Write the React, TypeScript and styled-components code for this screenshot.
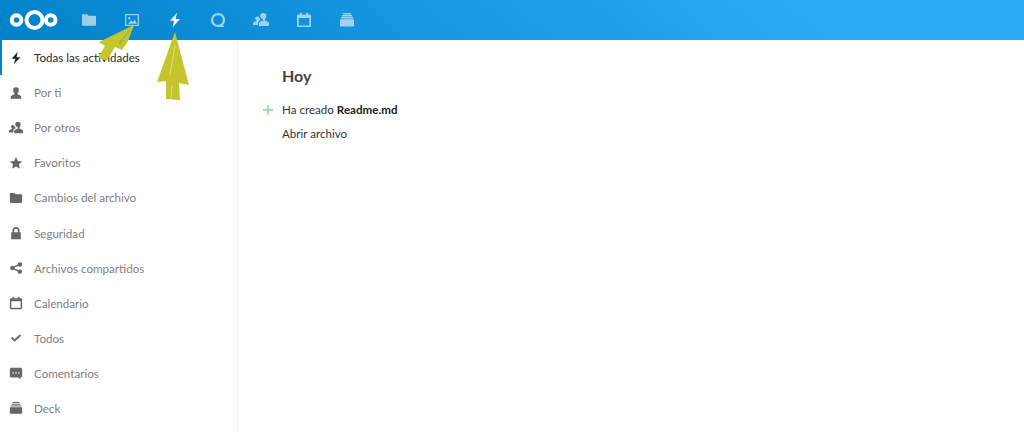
import React from 'react';
import styled, { createGlobalStyle } from 'styled-components';

const GlobalStyle = createGlobalStyle`
    html, body {
        margin: 0;
        padding: 0;
        background: #fff;
        font-family: 'Lato', 'Noto Sans', sans-serif;
        overflow: hidden;
    }
`;

const Page = styled.div`
    position: relative;
    width: 1024px;
    height: 432px;
    overflow: hidden;
`;

const Header = styled.header`
    height: 40px;
    display: flex;
    align-items: center;
    padding-left: 9px;
    background: linear-gradient(40deg, #0082c9 0%, #2aa9f5 78%);
`;

const Logo = styled.svg`
    width: 49px;
    height: 24px;
    margin-right: 9px;
`;

const AppList = styled.nav`
    display: flex;
`;

const AppIcon = styled.div<{ $active?: boolean }>`
    width: 43px;
    height: 40px;
    display: flex;
    align-items: center;
    justify-content: center;
    opacity: ${(p) => (p.$active ? 1 : 0.6)};
    svg {
        width: 16px;
        height: 16px;
        fill: #fff;
    }
`;

const Body = styled.div`
    display: flex;
    height: 392px;
`;

const Sidebar = styled.aside`
    width: 237px;
    border-right: 1px solid #eee;
    flex-shrink: 0;
`;

const NavItem = styled.div<{ $active?: boolean }>`
    height: 35.1px;
    display: flex;
    align-items: center;
    box-sizing: border-box;
    padding-left: 9px;
    font-size: 11.6px;
    color: ${(p) => (p.$active ? '#2a2a2a' : '#808080')};
    box-shadow: ${(p) => (p.$active ? 'inset 2px 0 0 #0082c9' : 'none')};
    svg {
        width: 14px;
        height: 14px;
        margin-right: 11px;
        flex-shrink: 0;
        fill: ${(p) => (p.$active ? '#222' : '#666')};
    }
`;

const Content = styled.main`
    flex: 1;
    padding: 26px 0 0 44px;
`;

const DayTitle = styled.h2`
    margin: 0 0 12px;
    font-size: 16px;
    line-height: 20px;
    font-weight: 700;
    color: #444;
`;

const ActivityRow = styled.div`
    position: relative;
    font-size: 11.6px;
    line-height: 24px;
    color: #333;
    b {
        color: #222;
    }
`;

const PlusMark = styled.svg`
    position: absolute;
    left: -19px;
    top: 7px;
    width: 10px;
    height: 10px;
    stroke: #7fe08a;
    stroke-width: 1.4;
`;

const Arrow = styled.svg`
    position: absolute;
    left: 0;
    top: 0;
    width: 1024px;
    height: 432px;
    pointer-events: none;
    fill: #c4c42c;
`;

const icons = {
    folder: <path d="M1 3.200c0-.5.4-1 1-1h4l1.600 1.600H14c.6 0 1 .5 1 1v7.900c0 .5-.4 1-1 1H2c-.6 0-1-.5-1-1z" />,
    image: (
        <path
            fillRule="evenodd"
            d="M1 2h14v12H1zm1.300 1.300v9.400h11.400V3.300zM4 11.700l3-3.400 1.800 1.800 2-2.400 2.200 4zM5.300 5a1.200 1.200 0 1 1 0 2.400 1.200 1.200 0 0 1 0-2.400z"
        />
    ),
    bolt: <path d="M10 .8 3 8.800h4.200L5.600 15.200 13 7h-4.400z" />,
    talk: (
        <path
            fillRule="evenodd"
            d="M8 1a7 7 0 0 1 4.700 12.200l2 1.800H8A7 7 0 0 1 8 1zm0 2.200a4.800 4.800 0 1 0 0 9.600 4.800 4.800 0 0 0 0-9.600z"
        />
    ),
    contacts: <path d="M10.200 1a3 3 0 0 1 3 3.200c0 1.400-.7 2.700-1.400 3.300v1c1.500.6 4.200 1.200 4.200 2.900V14H6v-2.600c0-1.700 2.700-2.300 4.200-2.900v-1C9.400 6.900 7.200 5.600 7.200 4.200a3 3 0 0 1 3-3.200zM4.200 4.500c.8 0 1.500.3 1.900.8.3 1 1 2 1.700 2.700-1.200.6-2.800 1.400-2.800 3.400V13H0v-1.700c0-1.300 2.200-1.800 3.400-2.300v-.9C2.700 7.600 2 6.700 2 6.500a2.200 2.200 0 0 1 2.200-2z" />,
    calendar: (
        <path
            fillRule="evenodd"
            d="M4 .8h1.800v1.700h4.400V.8H12v1.700h1.500c.8 0 1.500.7 1.500 1.500v9.500c0 .8-.7 1.500-1.500 1.500h-11c-.8 0-1.500-.7-1.500-1.500V4c0-.8.7-1.500 1.500-1.500H4zM2.700 6v7.200c0 .2.100.3.300.3h10c.2 0 .3-.1.300-.3V6z"
        />
    ),
    deck: <path d="M4 1h8v1.400H4zM3 3h10v1.400H3zM2 5h12v1.400H2zM1 7.200h14v6.300c0 .6-.4 1-1 1H2c-.6 0-1-.4-1-1z" />,
    user: <path d="M8 1.500a3.200 3.200 0 0 1 3.200 3.400c0 1.500-.7 2.900-1.500 3.500v1c1.700.7 4.300 1.300 4.300 3V14.500H2V12.400c0-1.700 2.600-2.300 4.300-3v-1C5.500 7.800 4.800 6.400 4.800 4.900A3.200 3.200 0 0 1 8 1.500z" />,
    star: <path d="m8 1 2.100 4.700 5 .5-3.800 3.300 1.100 5L8 11.900l-4.400 2.600 1.100-5L.9 6.200l5-.5z" />,
    lock: <path fillRule="evenodd" d="M8 1a4 4 0 0 1 4 4v2h1.500v8h-11V7H4V5a4 4 0 0 1 4-4zm0 2a2 2 0 0 0-2 2v2h4V5a2 2 0 0 0-2-2z" />,
    share: <path d="M12.500 1.500a2.500 2.500 0 1 1-1.900 4.100L6.400 7.500a2.500 2.500 0 0 1 0 1l4.200 1.900a2.500 2.500 0 1 1-.7 1.500L5.500 9.900a2.500 2.500 0 1 1 0-3.800l4.400-2A2.500 2.500 0 0 1 12.500 1.500z" />,
    check: <path d="m2.200 8.200 1.500-1.500 2.700 2.700 6-5.600 1.500 1.500-7.500 7.100z" />,
    comment: (
        <path
            fillRule="evenodd"
            d="M2.500 2h11c.8 0 1.500.7 1.500 1.500v8c0 .8-.7 1.500-1.500 1.500H13v2l-2.500-2h-8C1.700 13 1 12.300 1 11.500v-8C1 2.700 1.700 2 2.500 2zM4 7v1.500h1.500V7zm3.200 0v1.500h1.600V7zm3.300 0v1.500H12V7z"
        />
    ),
};

const Icon = ({ name }: { name: keyof typeof icons }) => <svg viewBox="0 0 16 16">{icons[name]}</svg>;

const appItems: (keyof typeof icons)[] = ['folder', 'image', 'bolt', 'talk', 'contacts', 'calendar', 'deck'];

const navItems: { label: string; icon: keyof typeof icons }[] = [
    { label: 'Todas las actividades', icon: 'bolt' },
    { label: 'Por ti', icon: 'user' },
    { label: 'Por otros', icon: 'contacts' },
    { label: 'Favoritos', icon: 'star' },
    { label: 'Cambios del archivo', icon: 'folder' },
    { label: 'Seguridad', icon: 'lock' },
    { label: 'Archivos compartidos', icon: 'share' },
    { label: 'Calendario', icon: 'calendar' },
    { label: 'Todos', icon: 'check' },
    { label: 'Comentarios', icon: 'comment' },
    { label: 'Deck', icon: 'deck' },
];

const App = () => (
    <Page>
        <GlobalStyle />
        <Header>
            <Logo viewBox="0 0 49 24">
                <g fill="none" stroke="#fff">
                    <circle cx="25.500" cy="12" r="8" strokeWidth="4" />
                    <circle cx="7.500" cy="12" r="4.800" strokeWidth="4" />
                    <circle cx="41.700" cy="12" r="4.800" strokeWidth="4" />
                </g>
            </Logo>
            <AppList>
                {appItems.map((name) => (
                    <AppIcon key={name} $active={name === 'bolt'}>
                        <Icon name={name} />
                    </AppIcon>
                ))}
            </AppList>
        </Header>
        <Body>
            <Sidebar>
                {navItems.map((item, i) => (
                    <NavItem key={item.label} $active={i === 0}>
                        <Icon name={item.icon} />
                        {item.label}
                    </NavItem>
                ))}
            </Sidebar>
            <Content>
                <DayTitle>Hoy</DayTitle>
                <ActivityRow>
                    <PlusMark viewBox="0 0 10 10">
                        <path d="M5 0v10M0 5h10" />
                    </PlusMark>
                    Ha creado <b>Readme.md</b>
                </ActivityRow>
                <ActivityRow>Abrir archivo</ActivityRow>
            </Content>
        </Body>
        <Arrow viewBox="0 0 1024 432">
            <path d="M175 32 189 85 179 83 180 100 166 99 166 81 157 82z" />
            <path d="M134 25 128 41 122 50 115 47 107 60 98 58 105 46 99 42z" />
            <path d="M130 30 119 44" stroke="#4aa6c8" strokeWidth="0.800" fill="none" />
            <path d="M175 45 170 75M172 85 171 98" stroke="#e6e67c" strokeWidth="0.800" fill="none" />
        </Arrow>
    </Page>
);

export default App;
